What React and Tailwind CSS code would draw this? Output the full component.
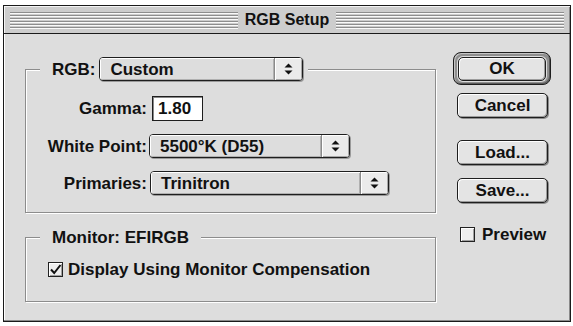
import React from "react";

const Arrows = () => (
  <svg width="9" height="12" viewBox="0 0 9 12">
    <path d="M4.5 0.5 L8.5 4.5 H0.5Z M0.5 7.5 H8.5 L4.5 11.5Z" fill="#111" />
  </svg>
);

function Popup({ w, children }) {
  return (
    <div className={`${w} h-[24px] flex rounded-[4px] border border-[#1e1e1e] bg-[#dddddd] shadow-[1px_1px_0_#9a9a9a] overflow-hidden`}>
      <div className="flex-1 pl-[10px] flex items-center shadow-[inset_1px_1px_0_#fff,inset_-1px_-1px_0_#b0b0b0]">
        {children}
      </div>
      <div className="w-[28px] flex items-center justify-center border-l border-[#8a8a8a] bg-[#ebebeb] shadow-[inset_1px_1px_0_#fff,inset_-1px_-1px_0_#a8a8a8]">
        <Arrows />
      </div>
    </div>
  );
}

function Check({ checked }) {
  return (
    <div className="w-[15px] h-[15px] shrink-0 border border-[#222] bg-[#eeeeee] shadow-[inset_1px_1px_0_#fff,inset_-1px_-1px_0_#a0a0a0] flex items-center justify-center">
      {checked && (
        <svg width="13" height="13" viewBox="0 0 13 13">
          <path d="M2 6.5 L5.2 10 L11.5 2" fill="none" stroke="#111" strokeWidth="2" />
        </svg>
      )}
    </div>
  );
}

function Btn({ children }) {
  return (
    <div className="w-[91px] h-[25px] rounded-[5px] border border-[#1e1e1e] bg-[#e4e4e4] shadow-[inset_1px_1px_0_#fff,inset_-1px_-1px_0_#9c9c9c,1px_1px_0_#8c8c8c] flex items-center justify-center">
      {children}
    </div>
  );
}

function Stripes() {
  return (
    <div className="flex-1 flex flex-col gap-[2px]">
      {[0, 1, 2, 3, 4, 5].map((i) => (
        <div key={i} className="h-px bg-[#8e8e8e] shadow-[0_1px_0_#fafafa]" />
      ))}
    </div>
  );
}

export default function App() {
  return (
    <div className="w-[573px] h-[326px] bg-white pl-[3px] pt-[5px] font-['Liberation_Sans',Arial,sans-serif] font-bold text-[#111] text-[17px] leading-none">
      <div className="w-[568px] h-[317px] border border-[#1a1a1a] bg-[#dddddd] flex flex-col shadow-[inset_-1px_-1px_0_#8a8a8a,inset_1px_1px_0_#fff]">
        {/* title bar */}
        <div className="h-[28px] border-b border-[#1a1a1a] bg-[#cdcdcd] shadow-[inset_1px_1px_0_#f4f4f4,inset_-1px_0_0_#8a8a8a] flex items-center px-[6px]">
          <Stripes />
          <div className="px-[7px] text-[16px]">RGB Setup</div>
          <Stripes />
        </div>

        {/* content */}
        <div className="flex-1 flex pl-[21px]">
          <div className="w-[411px] pt-[23px] flex flex-col">
            <fieldset className="border border-[#8c8c8c] shadow-[inset_1px_1px_0_#fff,1px_1px_0_#fff] pt-[15px] pb-[17px]">
              <legend className="ml-[14px] pl-[12px] pr-[5px] bg-[#dddddd]">
                <div className="flex items-center gap-[4px]">
                  <span>RGB:</span>
                  <Popup w="w-[204px]">Custom</Popup>
                </div>
              </legend>
              <div className="flex flex-col gap-[13px]">
                <div className="flex items-center">
                  <div className="w-[121px] text-right">Gamma:</div>
                  <div className="ml-[5px] w-[51px] h-[25px] border border-[#1e1e1e] bg-white shadow-[inset_1px_1px_0_#888] flex items-center pl-[5px]">
                    1.80
                  </div>
                </div>
                <div className="flex items-center">
                  <div className="w-[121px] text-right">White Point:</div>
                  <div className="ml-[2px]">
                    <Popup w="w-[201px]">5500°K (D55)</Popup>
                  </div>
                </div>
                <div className="flex items-center">
                  <div className="w-[121px] text-right">Primaries:</div>
                  <div className="ml-[3px]">
                    <Popup w="w-[239px]">Trinitron</Popup>
                  </div>
                </div>
              </div>
            </fieldset>

            <fieldset className="mt-[14px] border border-[#8c8c8c] shadow-[inset_1px_1px_0_#fff,1px_1px_0_#fff] pt-[12px] pb-[22px]">
              <legend className="ml-[14px] px-[12px] h-[20px] flex items-center bg-[#dddddd]">
                Monitor: EFIRGB
              </legend>
              <div className="h-[20px] flex items-center pl-[22px] gap-[5px]">
                <Check checked />
                <span>Display Using Monitor Compensation</span>
              </div>
            </fieldset>
          </div>

          {/* buttons */}
          <div className="ml-[17px] w-[99px] pt-[18px] flex flex-col">
            <div className="w-[98px] h-[33px] rounded-[8px] border border-[#1e1e1e] bg-[#8f8f8f] shadow-[inset_1px_1px_0_#c4c4c4,inset_-1px_-1px_0_#5a5a5a] flex items-center justify-center">
              <div className="rounded-[6px] bg-[#dddddd] p-px">
                <div className="w-[88px] h-[24px] rounded-[5px] border border-[#1e1e1e] bg-[#e4e4e4] shadow-[inset_1px_1px_0_#fff,inset_-1px_-1px_0_#9c9c9c] flex items-center justify-center">
                  OK
                </div>
              </div>
            </div>
            <div className="mt-[8px] ml-[4px]">
              <Btn>Cancel</Btn>
            </div>
            <div className="mt-[22px] ml-[4px]">
              <Btn>Load...</Btn>
            </div>
            <div className="mt-[13px] ml-[4px]">
              <Btn>Save...</Btn>
            </div>
            <div className="mt-[21px] ml-[7px] h-[20px] flex items-center gap-[7px]">
              <Check />
              <span>Preview</span>
            </div>
          </div>
        </div>
      </div>
    </div>
  );
}
